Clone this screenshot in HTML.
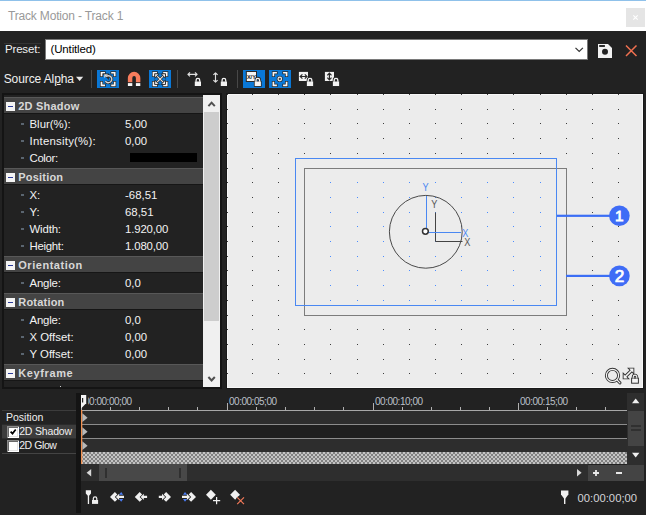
<!DOCTYPE html>
<html lang="en">
<head>
<meta charset="utf-8">
<title>Track Motion - Track 1</title>
<style>
html,body{margin:0;padding:0;}
body{width:646px;height:515px;overflow:hidden;background:#222222;position:relative;
  font-family:"Liberation Sans",sans-serif;color:#ffffff;}
.abs{position:absolute;}
.t{position:absolute;white-space:nowrap;line-height:1;}
/* title bar */
#titlebar{left:0;top:0;width:646px;height:31px;background:#ffffff;}
#topline{left:0;top:0;width:646px;height:1px;background:#8fc1ea;}
#title{left:8px;top:10px;font-size:12px;color:#999999;letter-spacing:-0.17px;}
#wclose{left:626px;top:8px;width:19px;height:19px;background:#e5e5e5;}
/* preset row */
#presetlbl{left:5px;top:44px;font-size:11.5px;color:#f0f0f0;letter-spacing:-0.18px;}
#presetbox{left:45px;top:39px;width:541px;height:19px;background:#ffffff;border:1px solid #7a7a7a;}
#presetval{left:50.5px;top:44px;font-size:11.5px;color:#000000;letter-spacing:-0.15px;}
/* toolbar */
#srcalpha{left:3.7px;top:73px;font-size:12px;color:#f0f0f0;letter-spacing:-0.1px;}
.sep{position:absolute;top:70px;width:1px;height:18px;background:#484848;}
.btn{position:absolute;top:70px;width:22px;height:18px;}
.btn.on{background:#0a78d7;}
/* property panel */
#panel{left:2px;top:93px;width:220px;height:296px;background:#141414;}
#plist{left:4px;top:95px;width:199px;height:292px;background:#222222;overflow:hidden;}
.hdr{position:absolute;left:0;width:199px;height:16px;background:#444444;box-shadow:inset 0 1px 0 #585858,0 1px 0 #161616;}
.hdr .box{position:absolute;left:2px;top:5px;width:9px;height:9px;background:#f4f4f4;}
.hdr .box:after{content:"";position:absolute;left:2px;top:4px;width:5px;height:1px;background:#2a3a9a;}
.hdr .t{left:14.3px;top:4px;font-size:11px;font-weight:bold;color:#d8d8d8;letter-spacing:0.2px;}
.row{position:absolute;left:0;width:199px;height:17px;}
.row .dash{position:absolute;left:17px;top:8px;width:3px;height:2px;background:#5a6570;}
.row .l{position:absolute;left:25.5px;top:4px;font-size:11.4px;color:#f2f2f2;white-space:nowrap;line-height:1;}
.row .v{position:absolute;left:121px;top:4px;font-size:11.4px;color:#f2f2f2;white-space:nowrap;line-height:1;}
/* scrollbar */
#vsb{left:203px;top:95px;width:17px;height:292px;background:#f0f0f0;}
#vsbthumb{left:204px;top:112px;width:15px;height:209px;background:#cdcdcd;}
/* canvas */
#canvasout{left:226px;top:93px;width:418px;height:296px;background:#181818;}
#canvas{left:227px;top:94px;width:416px;height:294px;background:#ececec;border:1px solid #f7f7f7;box-sizing:border-box;}
/* timeline */
#tlstrip{left:76px;top:393px;width:5px;height:120px;background:#141414;}
.kl{position:absolute;left:2px;width:74px;height:1px;background:#444444;}
.kt{position:absolute;font-size:10.5px;color:#f0f0f0;white-space:nowrap;line-height:1;}
.rt{position:absolute;font-size:10px;color:#bcc0c8;white-space:nowrap;line-height:1;top:397px;letter-spacing:-0.48px;}
.tick{position:absolute;width:1px;background:#b0b0b0;}
</style>
</head>
<body>
<!-- TITLE BAR -->
<div class="abs" id="titlebar"></div>
<div class="abs" id="topline"></div>
<div class="t" id="title">Track Motion - Track 1</div>
<div class="abs" id="wclose"><svg width="19" height="19" viewBox="0 0 19 19"><path d="M7.3 7.3l4.4 4.4M11.7 7.3l-4.4 4.4" stroke="#ffffff" stroke-width="1.1" fill="none"/></svg></div>

<!-- PRESET ROW -->
<div class="abs" style="left:4px;top:43px;width:37px;height:1px;background:#343434"></div>
<div class="t" id="presetlbl">Preset:</div>
<div class="abs" id="presetbox"></div>
<div class="t" id="presetval">(Untitled)</div>
<svg class="abs" style="left:570px;top:40px" width="76" height="20" viewBox="570 40 76 20">
  <path d="M575.5 47.8l3.7 3.7l3.7-3.7" stroke="#333333" stroke-width="1.2" fill="none"/>
  <path d="M598 44h10l4 4v10h-14z" fill="#f2f2f2"/>
  <rect x="599.2" y="45.1" width="5.7" height="1.8" fill="#161616"/>
  <circle cx="605" cy="51.7" r="3" fill="#222222"/>
  <path d="M626 45.5l10.5 10.5M636.5 45.5l-10.5 10.5" stroke="#f07050" stroke-width="1.5" fill="none"/>
</svg>

<!-- TOOLBAR -->
<div class="t" id="srcalpha">Source Al<span style="text-decoration:underline">p</span>ha</div>
<svg class="abs" style="left:75px;top:75px" width="10" height="8" viewBox="0 0 10 8"><path d="M1 1.7h7.2l-3.6 4.2z" fill="#e8e8e8"/></svg>
<div class="sep" style="left:91px"></div>
<div class="btn on" style="left:97px"></div>
<div class="btn" style="left:123px"></div>
<div class="btn on" style="left:149px"></div>
<div class="sep" style="left:177px"></div>
<div class="btn" style="left:183px"></div>
<div class="btn" style="left:209px"></div>
<div class="sep" style="left:237px"></div>
<div class="btn on" style="left:243px"></div>
<div class="btn on" style="left:269px"></div>
<div class="btn" style="left:295px"></div>
<div class="btn" style="left:321px"></div>
<!--TOOLBAR-ICONS-->
<svg class="abs" style="left:90px;top:66px" width="260" height="26" viewBox="90 66 260 26">
<g transform="translate(100.5 71.8)"><path d="M1.00 5.20V0.95H5.25 M9.95 0.95H14.20V5.20 M1.00 9.30V13.55H5.25 M9.95 13.55H14.20V9.30" fill="none" stroke="#2a2a2a" stroke-width="3.1"/><path d="M1.00 4.45V0.95H4.50 M10.70 0.95H14.20V4.45 M1.00 10.05V13.55H4.50 M10.70 13.55H14.20V10.05" fill="none" stroke="#f6f6f6" stroke-width="1.7"/></g>
<path d="M106 76.6a3.5 3.5 0 1 1 -0.6 4.6" fill="none" stroke="#2a2a2a" stroke-width="2.8"/>
<path d="M104.2 74.2h4v4z" fill="#2a2a2a" stroke="#2a2a2a" stroke-width="1.4"/>
<path d="M106 76.6a3.5 3.5 0 1 1 -0.6 4.6" fill="none" stroke="#d4d4d4" stroke-width="1.4"/>
<path d="M104.2 74.2h3.8l-3.8 3.8z" fill="#d4d4d4"/>
<path d="M127.85 82.2V78.1a6.25 6.25 0 0 1 12.5 0V82.2h-4.45V77.9a1.8 1.8 0 0 0 -3.6 0V82.2z" fill="#f87c5c"/>
<rect x="127.9" y="83.1" width="4.4" height="2.9" fill="#f6f6f6"/><rect x="135.9" y="83.1" width="4.4" height="2.9" fill="#f6f6f6"/>
<g transform="translate(152.5 71.8)"><path d="M1.00 5.20V0.95H5.25 M9.95 0.95H14.20V5.20 M1.00 9.30V13.55H5.25 M9.95 13.55H14.20V9.30" fill="none" stroke="#2a2a2a" stroke-width="3.1"/><path d="M1.00 4.45V0.95H4.50 M10.70 0.95H14.20V4.45 M1.00 10.05V13.55H4.50 M10.70 13.55H14.20V10.05" fill="none" stroke="#f6f6f6" stroke-width="1.7"/></g>
<path d="M156.3 75.3L163.9 82.9M163.9 75.3L156.3 82.9" stroke="#2a2a2a" stroke-width="2.4" fill="none"/>
<path d="M156.3 75.3L163.9 82.9M163.9 75.3L156.3 82.9" stroke="#e8e8e8" stroke-width="1.1" fill="none"/>
<path d="M155.2 74.2h3l-3 3zM165 74.2h-3l3 3zM155.2 84h3l-3-3zM165 84h-3l3-3z" fill="#2a2a2a" stroke="#2a2a2a" stroke-width="1.4"/>
<path d="M155.2 74.2h3l-3 3zM165 74.2h-3l3 3zM155.2 84h3l-3-3zM165 84h-3l3-3z" fill="#f0f0f0"/>
<path d="M188.2 74.4H196.8M190 72.4l-2.1 2l2.1 2M195 72.4l2.1 2l-2.1 2" fill="none" stroke="#e0e0e0" stroke-width="1.15" stroke-linejoin="round"/>
<g transform="translate(194.8 81.5)"><rect x="0" y="0" width="6.2" height="4.5" fill="#f2f2f2"/><path d="M1.3 0.3V-1.4a1.8 1.8 0 0 1 3.6 0V0.3" fill="none" stroke="#f2f2f2" stroke-width="1.3"/></g>
<path d="M215.5 73.2V81.8M213.4 74.9l2.1-2.1l2.1 2.1M213.4 80.1l2.1 2.1l2.1-2.1" fill="none" stroke="#e0e0e0" stroke-width="1.15" stroke-linejoin="round"/>
<g transform="translate(220.8 81.5)"><rect x="0" y="0" width="6.2" height="4.5" fill="#f2f2f2"/><path d="M1.3 0.3V-1.4a1.8 1.8 0 0 1 3.6 0V0.3" fill="none" stroke="#f2f2f2" stroke-width="1.3"/></g>
<rect x="246.3" y="71.5" width="10.2" height="10" fill="#f4f4f4" stroke="#2a2a2a" stroke-width="1"/>
<text x="251.4" y="78.6" font-family="Liberation Sans, sans-serif" font-size="5.6" font-weight="bold" fill="#222222" text-anchor="middle">X/Y</text>
<g transform="translate(254.7 81.5)"><rect x="-0.8" y="-0.6" width="7.8" height="5.9" fill="#2a2a2a"/><path d="M1.3 0.3V-1.4a1.8 1.8 0 0 1 3.6 0V0.3" fill="none" stroke="#2a2a2a" stroke-width="2.9"/><rect x="0" y="0" width="6.2" height="4.5" fill="#f2f2f2"/><path d="M1.3 0.3V-1.4a1.8 1.8 0 0 1 3.6 0V0.3" fill="none" stroke="#f2f2f2" stroke-width="1.3"/></g>
<g transform="translate(272.4 71.8)"><path d="M1.00 5.20V0.95H5.25 M9.95 0.95H14.20V5.20 M1.00 9.30V13.55H5.25 M9.95 13.55H14.20V9.30" fill="none" stroke="#2a2a2a" stroke-width="3.1"/><path d="M1.00 4.45V0.95H4.50 M10.70 0.95H14.20V4.45 M1.00 10.05V13.55H4.50 M10.70 13.55H14.20V10.05" fill="none" stroke="#f6f6f6" stroke-width="1.7"/></g>
<circle cx="279.8" cy="79" r="3.1" fill="#2a2a2a"/><circle cx="279.8" cy="79" r="2.4" fill="#e4e4e4"/><circle cx="279.8" cy="79" r="1.15" fill="#4a4a4a"/>
<rect x="298.9" y="71.9" width="9.1" height="9.1" fill="#f2f2f2"/>
<path d="M300.6 76.5H306.6M302.4 74.4l-2.2 2.1l2.2 2.1M304.8 74.4l2.2 2.1l-2.2 2.1" fill="none" stroke="#2a2a2a" stroke-width="1.2"/>
<g transform="translate(306.9 81.5)"><rect x="-0.8" y="-0.6" width="7.8" height="5.9" fill="#2a2a2a"/><path d="M1.3 0.3V-1.4a1.8 1.8 0 0 1 3.6 0V0.3" fill="none" stroke="#2a2a2a" stroke-width="2.9"/><rect x="0" y="0" width="6.2" height="4.5" fill="#f2f2f2"/><path d="M1.3 0.3V-1.4a1.8 1.8 0 0 1 3.6 0V0.3" fill="none" stroke="#f2f2f2" stroke-width="1.3"/></g>
<rect x="324.9" y="71.9" width="9.1" height="9.1" fill="#f2f2f2"/>
<path d="M329.4 73.6V79.4M327.3 75.4l2.1-2.2l2.1 2.2M327.3 77.6l2.1 2.2l2.1-2.2" fill="none" stroke="#2a2a2a" stroke-width="1.2"/>
<g transform="translate(332.9 81.5)"><rect x="-0.8" y="-0.6" width="7.8" height="5.9" fill="#2a2a2a"/><path d="M1.3 0.3V-1.4a1.8 1.8 0 0 1 3.6 0V0.3" fill="none" stroke="#2a2a2a" stroke-width="2.9"/><rect x="0" y="0" width="6.2" height="4.5" fill="#f2f2f2"/><path d="M1.3 0.3V-1.4a1.8 1.8 0 0 1 3.6 0V0.3" fill="none" stroke="#f2f2f2" stroke-width="1.3"/></g>
</svg>
<svg class="abs" style="left:82px;top:485px" width="170" height="26" viewBox="82 485 170 26">
<path d="M85.8 490.2h5.2v3.2l-1.9 2.4v8.3h-1.3v-8.3l-2-2.4z" fill="#f0f0f0"/>
<rect x="92" y="500" width="6.1" height="3.9" fill="#f0f0f0"/><path d="M93.3 500.3V498.6a1.75 1.75 0 0 1 3.5 0V500.3" fill="none" stroke="#f0f0f0" stroke-width="1.2"/>
<path d="M110.0 496.9l4.9-4.9l2.4 2.4l-2.5 2.5l2.5 2.5l-2.4 2.4z" fill="#f0f0f0"/>
<path d="M119 494.7l2.2-2.7l2 2.7zM119 499.1l2.2 2.7l2-2.7z" fill="#4a7cf4"/>
<path d="M115.9 496.9l3.2-3.1v2h4.9v2.2h-4.9v2z" fill="#f0f0f0"/>
<path d="M134.8 496.9l4.9-4.9l2.4 2.4l-2.5 2.5l2.5 2.5l-2.4 2.4z" fill="#f0f0f0"/>
<path d="M140.6 496.9l3.2-3.1v2h3.3v2.2h-3.3v2z" fill="#f0f0f0"/>
<path d="M171.0 496.9l-4.9-4.9l-2.4 2.4l2.5 2.5l-2.5 2.5l2.4 2.4z" fill="#f0f0f0"/>
<path d="M165.2 496.9l-3.2-3.1v2h-3.2v2.2h3.2v2z" fill="#f0f0f0"/>
<path d="M196.0 496.9l-4.9-4.9l-2.4 2.4l2.5 2.5l-2.5 2.5l2.4 2.4z" fill="#f0f0f0"/>
<path d="M183 494.7l2-2.7l2.2 2.7zM183 499.1l2 2.7l2.2-2.7z" fill="#4a7cf4"/>
<path d="M190.1 496.9l-3.2-3.1v2h-4.9v2.2h4.9v2z" fill="#f0f0f0"/>
<path d="M206 494.7l4.9-5l4.9 5l-4.9 5z" fill="#f0f0f0"/>
<path d="M213 500.7h7.2M216.6 497.1v7.2" stroke="#222222" stroke-width="3" fill="none"/>
<path d="M213 500.7h7.2M216.6 497.1v7.2" stroke="#f0f0f0" stroke-width="1.2" fill="none"/>
<path d="M230.2 494.7l4.9-5l4.9 5l-4.9 5z" fill="#f0f0f0"/>
<path d="M237.2 497.3l6.8 6.8M244 497.3l-6.8 6.8" stroke="#222222" stroke-width="3" fill="none"/>
<path d="M237.2 497.3l6.8 6.8M244 497.3l-6.8 6.8" stroke="#f07858" stroke-width="1.2" fill="none"/>
</svg>
<!--/TOOLBAR-ICONS-->

<!-- PROPERTY PANEL -->
<div class="abs" id="panel"></div>
<div class="abs" id="plist">
  <div class="hdr" style="top:2px"><div class="box"></div><div class="t">2D Shadow</div></div>
  <div class="row" style="top:20px"><div class="dash"></div><div class="l">Blur(%):</div><div class="v">5,00</div></div>
  <div class="row" style="top:37px"><div class="dash"></div><div class="l" style="letter-spacing:0.24px">Intensity(%):</div><div class="v">0,00</div></div>
  <div class="row" style="top:54px"><div class="dash"></div><div class="l" style="letter-spacing:-0.35px">Color:</div><div class="abs" style="left:126px;top:4px;width:67px;height:9px;background:#000000"></div></div>
  <div class="hdr" style="top:73px"><div class="box"></div><div class="t">Position</div></div>
  <div class="row" style="top:91px"><div class="dash"></div><div class="l">X:</div><div class="v">-68,51</div></div>
  <div class="row" style="top:108px"><div class="dash"></div><div class="l">Y:</div><div class="v">68,51</div></div>
  <div class="row" style="top:125px"><div class="dash"></div><div class="l" style="letter-spacing:-0.15px">Width:</div><div class="v" style="letter-spacing:-0.14px">1.920,00</div></div>
  <div class="row" style="top:142px"><div class="dash"></div><div class="l" style="letter-spacing:-0.3px">Height:</div><div class="v" style="letter-spacing:-0.14px">1.080,00</div></div>
  <div class="hdr" style="top:161px"><div class="box"></div><div class="t" style="letter-spacing:0.52px">Orientation</div></div>
  <div class="row" style="top:179px"><div class="dash"></div><div class="l" style="letter-spacing:-0.2px">Angle:</div><div class="v">0,0</div></div>
  <div class="hdr" style="top:198px"><div class="box"></div><div class="t">Rotation</div></div>
  <div class="row" style="top:216px"><div class="dash"></div><div class="l" style="letter-spacing:-0.2px">Angle:</div><div class="v">0,0</div></div>
  <div class="row" style="top:233px"><div class="dash"></div><div class="l">X Offset:</div><div class="v">0,00</div></div>
  <div class="row" style="top:250px"><div class="dash"></div><div class="l">Y Offset:</div><div class="v">0,00</div></div>
  <div class="hdr" style="top:269px"><div class="box"></div><div class="t" style="letter-spacing:0.6px">Keyframe</div></div>
</div>
<div class="abs" style="left:60px;top:386px;width:1px;height:1px;background:#d0d0d0"></div>
<div class="abs" id="vsb"></div>
<div class="abs" id="vsbthumb"></div>
<svg class="abs" style="left:203px;top:95px" width="17" height="292" viewBox="0 0 17 292">
  <path d="M5.4 11.2l3.2-3.5l3.2 3.5" stroke="#505050" stroke-width="2" fill="none"/>
  <path d="M5.4 282l3.2 3.5l3.2-3.5" stroke="#505050" stroke-width="2" fill="none"/>
</svg>

<!-- CANVAS -->
<div class="abs" id="canvasout"></div>
<div class="abs" id="canvas"></div>
<!--CANVAS-SVG-->
<svg class="abs" style="left:227px;top:94px" width="416" height="294" viewBox="227 94 416 294">
<path d="M227 94h1v1h-1zM227 109h1v1h-1zM227 123h1v1h-1zM227 138h1v1h-1zM227 153h1v1h-1zM227 168h1v1h-1zM227 182h1v1h-1zM227 197h1v1h-1zM227 212h1v1h-1zM227 226h1v1h-1zM227 241h1v1h-1zM227 256h1v1h-1zM227 270h1v1h-1zM227 285h1v1h-1zM227 300h1v1h-1zM227 315h1v1h-1zM227 329h1v1h-1zM227 344h1v1h-1zM227 359h1v1h-1zM227 373h1v1h-1zM252 94h1v1h-1zM252 109h1v1h-1zM252 123h1v1h-1zM252 138h1v1h-1zM252 153h1v1h-1zM252 168h1v1h-1zM252 182h1v1h-1zM252 197h1v1h-1zM252 212h1v1h-1zM252 226h1v1h-1zM252 241h1v1h-1zM252 256h1v1h-1zM252 270h1v1h-1zM252 285h1v1h-1zM252 300h1v1h-1zM252 315h1v1h-1zM252 329h1v1h-1zM252 344h1v1h-1zM252 359h1v1h-1zM252 373h1v1h-1zM278 94h1v1h-1zM278 109h1v1h-1zM278 123h1v1h-1zM278 138h1v1h-1zM278 153h1v1h-1zM278 168h1v1h-1zM278 182h1v1h-1zM278 197h1v1h-1zM278 212h1v1h-1zM278 226h1v1h-1zM278 241h1v1h-1zM278 256h1v1h-1zM278 270h1v1h-1zM278 285h1v1h-1zM278 300h1v1h-1zM278 315h1v1h-1zM278 329h1v1h-1zM278 344h1v1h-1zM278 359h1v1h-1zM278 373h1v1h-1zM304 94h1v1h-1zM304 109h1v1h-1zM304 123h1v1h-1zM304 138h1v1h-1zM304 153h1v1h-1zM304 329h1v1h-1zM304 344h1v1h-1zM304 359h1v1h-1zM304 373h1v1h-1zM330 94h1v1h-1zM330 109h1v1h-1zM330 123h1v1h-1zM330 138h1v1h-1zM330 153h1v1h-1zM330 329h1v1h-1zM330 344h1v1h-1zM330 359h1v1h-1zM330 373h1v1h-1zM357 94h1v1h-1zM357 109h1v1h-1zM357 123h1v1h-1zM357 138h1v1h-1zM357 153h1v1h-1zM357 329h1v1h-1zM357 344h1v1h-1zM357 359h1v1h-1zM357 373h1v1h-1zM383 94h1v1h-1zM383 109h1v1h-1zM383 123h1v1h-1zM383 138h1v1h-1zM383 153h1v1h-1zM383 329h1v1h-1zM383 344h1v1h-1zM383 359h1v1h-1zM383 373h1v1h-1zM409 94h1v1h-1zM409 109h1v1h-1zM409 123h1v1h-1zM409 138h1v1h-1zM409 153h1v1h-1zM409 329h1v1h-1zM409 344h1v1h-1zM409 359h1v1h-1zM409 373h1v1h-1zM435 94h1v1h-1zM435 109h1v1h-1zM435 123h1v1h-1zM435 138h1v1h-1zM435 153h1v1h-1zM435 329h1v1h-1zM435 344h1v1h-1zM435 359h1v1h-1zM435 373h1v1h-1zM461 94h1v1h-1zM461 109h1v1h-1zM461 123h1v1h-1zM461 138h1v1h-1zM461 153h1v1h-1zM461 329h1v1h-1zM461 344h1v1h-1zM461 359h1v1h-1zM461 373h1v1h-1zM487 94h1v1h-1zM487 109h1v1h-1zM487 123h1v1h-1zM487 138h1v1h-1zM487 153h1v1h-1zM487 329h1v1h-1zM487 344h1v1h-1zM487 359h1v1h-1zM487 373h1v1h-1zM513 94h1v1h-1zM513 109h1v1h-1zM513 123h1v1h-1zM513 138h1v1h-1zM513 153h1v1h-1zM513 329h1v1h-1zM513 344h1v1h-1zM513 359h1v1h-1zM513 373h1v1h-1zM540 94h1v1h-1zM540 109h1v1h-1zM540 123h1v1h-1zM540 138h1v1h-1zM540 153h1v1h-1zM540 329h1v1h-1zM540 344h1v1h-1zM540 359h1v1h-1zM540 373h1v1h-1zM566 94h1v1h-1zM566 109h1v1h-1zM566 123h1v1h-1zM566 138h1v1h-1zM566 153h1v1h-1zM566 329h1v1h-1zM566 344h1v1h-1zM566 359h1v1h-1zM566 373h1v1h-1zM592 94h1v1h-1zM592 109h1v1h-1zM592 123h1v1h-1zM592 138h1v1h-1zM592 153h1v1h-1zM592 168h1v1h-1zM592 182h1v1h-1zM592 197h1v1h-1zM592 212h1v1h-1zM592 226h1v1h-1zM592 241h1v1h-1zM592 256h1v1h-1zM592 270h1v1h-1zM592 285h1v1h-1zM592 300h1v1h-1zM592 315h1v1h-1zM592 329h1v1h-1zM592 344h1v1h-1zM592 359h1v1h-1zM592 373h1v1h-1zM618 94h1v1h-1zM618 109h1v1h-1zM618 123h1v1h-1zM618 138h1v1h-1zM618 153h1v1h-1zM618 168h1v1h-1zM618 182h1v1h-1zM618 197h1v1h-1zM618 212h1v1h-1zM618 226h1v1h-1zM618 241h1v1h-1zM618 256h1v1h-1zM618 270h1v1h-1zM618 285h1v1h-1zM618 300h1v1h-1zM618 315h1v1h-1zM618 329h1v1h-1zM618 344h1v1h-1zM618 359h1v1h-1zM618 373h1v1h-1z" fill="#3c3c3c"/>
<path d="M330 182h1v1h-1zM330 197h1v1h-1zM330 212h1v1h-1zM330 226h1v1h-1zM330 241h1v1h-1zM330 256h1v1h-1zM330 270h1v1h-1zM330 285h1v1h-1zM330 300h1v1h-1zM357 182h1v1h-1zM357 197h1v1h-1zM357 212h1v1h-1zM357 226h1v1h-1zM357 241h1v1h-1zM357 256h1v1h-1zM357 270h1v1h-1zM357 285h1v1h-1zM357 300h1v1h-1zM383 182h1v1h-1zM383 197h1v1h-1zM383 212h1v1h-1zM383 226h1v1h-1zM383 241h1v1h-1zM383 256h1v1h-1zM383 270h1v1h-1zM383 285h1v1h-1zM383 300h1v1h-1zM409 182h1v1h-1zM409 197h1v1h-1zM409 212h1v1h-1zM409 226h1v1h-1zM409 241h1v1h-1zM409 256h1v1h-1zM409 270h1v1h-1zM409 285h1v1h-1zM409 300h1v1h-1zM435 182h1v1h-1zM435 197h1v1h-1zM435 212h1v1h-1zM435 226h1v1h-1zM435 241h1v1h-1zM435 256h1v1h-1zM435 270h1v1h-1zM435 285h1v1h-1zM435 300h1v1h-1zM461 182h1v1h-1zM461 197h1v1h-1zM461 212h1v1h-1zM461 226h1v1h-1zM461 241h1v1h-1zM461 256h1v1h-1zM461 270h1v1h-1zM461 285h1v1h-1zM461 300h1v1h-1zM487 182h1v1h-1zM487 197h1v1h-1zM487 212h1v1h-1zM487 226h1v1h-1zM487 241h1v1h-1zM487 256h1v1h-1zM487 270h1v1h-1zM487 285h1v1h-1zM487 300h1v1h-1zM513 182h1v1h-1zM513 197h1v1h-1zM513 212h1v1h-1zM513 226h1v1h-1zM513 241h1v1h-1zM513 256h1v1h-1zM513 270h1v1h-1zM513 285h1v1h-1zM513 300h1v1h-1zM540 182h1v1h-1zM540 197h1v1h-1zM540 212h1v1h-1zM540 226h1v1h-1zM540 241h1v1h-1zM540 256h1v1h-1zM540 270h1v1h-1zM540 285h1v1h-1zM540 300h1v1h-1z" fill="#4a8cff"/>
<rect x="304.5" y="168.5" width="262" height="147" fill="none" stroke="#7c7c7c" stroke-width="1"/>
<rect x="295.5" y="158.5" width="261" height="147" fill="none" stroke="#4a88f2" stroke-width="1"/>
<circle cx="425.8" cy="231.8" r="36.4" fill="none" stroke="#4a4a4a" stroke-width="1"/>
<path d="M435.5 212.5V241.5H462.5" fill="none" stroke="#444444" stroke-width="1"/>
<path d="M426.5 196V229M428 232.5H461" fill="none" stroke="#4a88f2" stroke-width="1"/>
<circle cx="425.4" cy="231.3" r="2.9" fill="#ffffff" stroke="#333333" stroke-width="1.5"/>
<text transform="translate(425.6 190.5) scale(0.9 1)" font-family="Liberation Sans, sans-serif" font-size="10.2" fill="#4a88f2" text-anchor="middle">Y</text>
<text transform="translate(465.4 236.6) scale(0.9 1)" font-family="Liberation Sans, sans-serif" font-size="10.2" fill="#4a88f2" text-anchor="middle">X</text>
<text transform="translate(434.4 207.6) scale(0.9 1)" font-family="Liberation Sans, sans-serif" font-size="10.2" fill="#555555" text-anchor="middle">Y</text>
<text transform="translate(467.3 246.1) scale(0.9 1)" font-family="Liberation Sans, sans-serif" font-size="10.2" fill="#555555" text-anchor="middle">X</text>
<rect x="557" y="214.7" width="54" height="2.2" fill="#3b6ef5"/>
<rect x="566" y="274.8" width="45" height="2.2" fill="#3b6ef5"/>
<circle cx="619.4" cy="215.8" r="10.3" fill="#3f6cf6"/>
<circle cx="619.4" cy="275.9" r="10.3" fill="#3f6cf6"/>
<text x="619.2" y="221.2" font-family="Liberation Sans, sans-serif" font-size="15.4" fill="#ffffff" stroke="#ffffff" stroke-width="0.8" text-anchor="middle">1</text>
<text transform="translate(619.5 281.5) scale(1.1 1)" font-family="Liberation Sans, sans-serif" font-size="15.6" fill="#ffffff" stroke="#ffffff" stroke-width="0.7" text-anchor="middle">2</text>
<circle cx="612.5" cy="375.4" r="6.1" fill="none" stroke="#333333" stroke-width="3"/>
<path d="M617 379.9l3 3" stroke="#333333" stroke-width="3" stroke-linecap="round"/>
<circle cx="612.5" cy="375.4" r="6.1" fill="none" stroke="#f4f4f4" stroke-width="1.2"/>
<path d="M617 379.9l2.9 2.9" stroke="#f4f4f4" stroke-width="1.2" stroke-linecap="round"/>
<path d="M623.6 378.4L623.6 374.2L625.13 375.73L630.73 370.13L629.2 368.6L633.4 368.6L633.4 372.8L631.87 371.27L626.27 376.87L627.8 378.4Z" fill="#333333" stroke="#333333" stroke-width="1.8" stroke-linejoin="miter"/>
<path d="M623.6 378.4L623.6 374.2L625.13 375.73L630.73 370.13L629.2 368.6L633.4 368.6L633.4 372.8L631.87 371.27L626.27 376.87L627.8 378.4Z" fill="#f4f4f4"/>
<path d="M633.2 378.5v-1.6a1.8 1.8 0 0 1 3.6 0v1.6" fill="none" stroke="#333333" stroke-width="2.8"/>
<rect x="631.6" y="378.2" width="6.8" height="5" fill="#f4f4f4" stroke="#333333" stroke-width="1"/>
<path d="M633.2 378.5v-1.6a1.8 1.8 0 0 1 3.6 0v1.6" fill="none" stroke="#f4f4f4" stroke-width="1.1"/>
</svg>
<!--/CANVAS-SVG-->

<!-- TIMELINE -->
<!--TIMELINE-->
<div class="abs" style="left:2px;top:425px;width:74px;height:13px;background:#3c3c3c"></div>
<div class="kl" style="top:410px;background:#3c3c3c"></div>
<div class="kl" style="top:424px;background:#2a2a2a"></div>
<div class="kl" style="top:438px;background:#2c2c2c"></div>
<div class="kl" style="top:453px;background:#444444"></div>
<div class="kt" style="left:6px;top:412px">Position</div>
<div class="kt" style="left:19.2px;top:426px;letter-spacing:-0.18px">2D Shadow</div>
<div class="kt" style="left:19.2px;top:440px;letter-spacing:-0.42px">2D Glow</div>
<div class="abs" style="left:7px;top:426px;width:12px;height:12px;background:#ffffff;box-shadow:inset 1px 1px 0 #8a8a8a,inset -1px -1px 0 #ffffff,inset 2px 2px 0 #6a6a6a,inset -2px -2px 0 #e2e2e2"></div>
<svg class="abs" style="left:7px;top:426px" width="11" height="11" viewBox="0 0 11 11"><path d="M3.6 5.6l1.9 2l3.2-4.2" stroke="#000" stroke-width="1.7" fill="none"/></svg>
<div class="abs" style="left:7px;top:440px;width:12px;height:12px;background:#ffffff;box-shadow:inset 1px 1px 0 #8a8a8a,inset -1px -1px 0 #ffffff,inset 2px 2px 0 #6a6a6a,inset -2px -2px 0 #e2e2e2"></div>
<div class="abs" id="tlstrip"></div>
<div class="abs" style="left:81px;top:411px;width:546px;height:13px;background:#2d2d2d"></div>
<div class="abs" style="left:81px;top:425px;width:546px;height:13px;background:#1f1f1f"></div>
<div class="abs" style="left:81px;top:439px;width:546px;height:14px;background:#2d2d2d"></div>
<div class="abs" style="left:81px;top:410px;width:546px;height:1px;background:#a8a8a8"></div>
<div class="abs" style="left:81px;top:424px;width:546px;height:1px;background:#8c8c8c"></div>
<div class="abs" style="left:81px;top:438px;width:546px;height:1px;background:#8c8c8c"></div>
<div class="abs" style="left:81px;top:452px;width:546px;height:12px;background-color:#808080;background-image:linear-gradient(45deg,#c4c4c4 25%,transparent 25%,transparent 75%,#c4c4c4 75%),linear-gradient(45deg,#c4c4c4 25%,transparent 25%,transparent 75%,#c4c4c4 75%);background-size:4px 4px;background-position:0 0,2px 2px"></div>
<div class="tick" style="left:81px;top:403px;height:7px"></div>
<div class="tick" style="left:110px;top:407px;height:3px"></div>
<div class="tick" style="left:139px;top:407px;height:3px"></div>
<div class="tick" style="left:168px;top:407px;height:3px"></div>
<div class="tick" style="left:197px;top:407px;height:3px"></div>
<div class="tick" style="left:227px;top:403px;height:7px"></div>
<div class="tick" style="left:256px;top:407px;height:3px"></div>
<div class="tick" style="left:285px;top:407px;height:3px"></div>
<div class="tick" style="left:314px;top:407px;height:3px"></div>
<div class="tick" style="left:343px;top:407px;height:3px"></div>
<div class="tick" style="left:373px;top:403px;height:7px"></div>
<div class="tick" style="left:402px;top:407px;height:3px"></div>
<div class="tick" style="left:431px;top:407px;height:3px"></div>
<div class="tick" style="left:460px;top:407px;height:3px"></div>
<div class="tick" style="left:489px;top:407px;height:3px"></div>
<div class="tick" style="left:518px;top:403px;height:7px"></div>
<div class="tick" style="left:547px;top:407px;height:3px"></div>
<div class="tick" style="left:576px;top:407px;height:3px"></div>
<div class="tick" style="left:605px;top:407px;height:3px"></div>
<div class="rt" style="left:84px">00:00:00;00</div>
<div class="rt" style="left:229px">00:00:05;00</div>
<div class="rt" style="left:375px">00:00:10;00</div>
<div class="rt" style="left:520px">00:00:15;00</div>
<svg class="abs" style="left:0;top:390px" width="646" height="125" viewBox="0 390 646 125">
<rect x="81" y="410" width="1.3" height="54" fill="#f09050"/>
<rect x="85" y="396" width="3.1" height="10" fill="#222222"/><path d="M81 395h5.2v8.3l-5.2 5.2z" fill="#f4f4f4"/><rect x="82" y="398" width="1.2" height="4.5" fill="#222"/>
<path d="M82.3 413.3l5.3 4.4l-5.3 4.4z" fill="#b8b8b8"/>
<path d="M82.3 427.3l5.3 4.4l-5.3 4.4z" fill="#b8b8b8"/>
<path d="M82.3 441.3l5.3 4.4l-5.3 4.4z" fill="#b8b8b8"/>
<rect x="81" y="464" width="507" height="17" fill="#2e2e2e"/>
<rect x="99" y="464" width="88" height="17" fill="#484848"/>
<rect x="105" y="468" width="2" height="10" fill="#303030"/><rect x="179" y="468" width="2" height="10" fill="#303030"/>
<path d="M91.2 469l-4.6 3.8l4.6 3.8z" fill="#d8d8d8"/>
<path d="M577 469l4.6 3.8l-4.6 3.8z" fill="#d8d8d8"/>
<rect x="588" y="465" width="56" height="16" fill="#444444"/>
<path d="M593 473h6M596 470v6M616 473h6" stroke="#e8e8e8" stroke-width="1.8" fill="none"/>
<rect x="627" y="393" width="17" height="72" fill="#2e2e2e"/>
<rect x="628" y="411" width="16" height="35" fill="#444444"/>
<rect x="631" y="425" width="10" height="2" fill="#303030"/><rect x="631" y="429" width="10" height="2" fill="#303030"/>
<path d="M632 403.2l3.7-4.6l3.7 4.6z" fill="#f0f0f0"/>
<path d="M632 452.8l3.7 4.6l3.7-4.6z" fill="#f0f0f0"/>
<path d="M561 490.5h7.4v4l-3 4h-1.4l-3-4z" fill="#f0f0f0"/><rect x="564" y="497" width="1.4" height="7" fill="#f0f0f0"/>
<text x="577.6" y="501.7" font-family="Liberation Sans, sans-serif" font-size="11.25" fill="#d4d4d8">00:00:00;00</text>
</svg>
<!--/TIMELINE-->

</body>
</html>
